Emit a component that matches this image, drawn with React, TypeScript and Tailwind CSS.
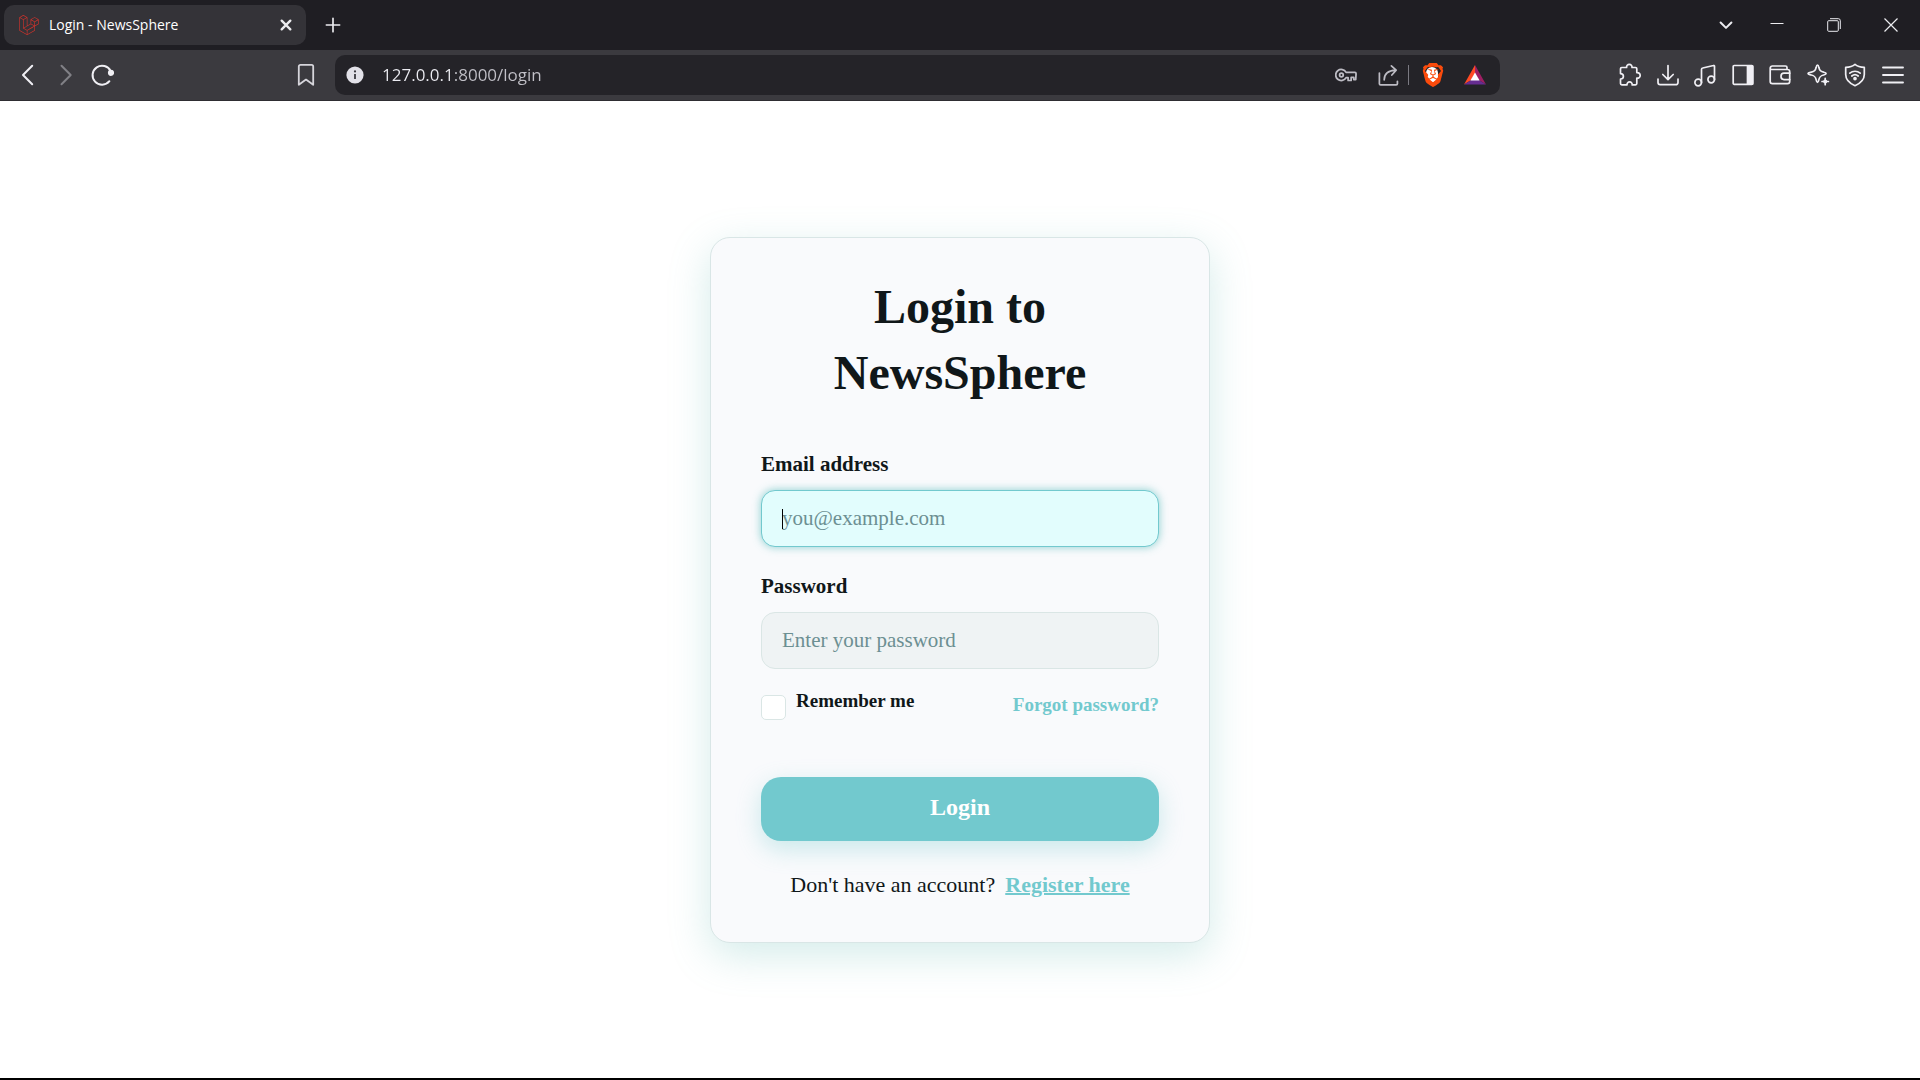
import type { ReactNode } from "react";
import { SiBrave, SiLaravel } from "react-icons/si";

function Icon({ children, width = 1.7, className = "size-6" }: { children: ReactNode; width?: number; className?: string }) {
  return (
    <svg
      viewBox="0 0 24 24"
      className={className}
      fill="none"
      stroke="currentColor"
      strokeWidth={width}
      strokeLinecap="round"
      strokeLinejoin="round"
      aria-hidden="true"
    >
      {children}
    </svg>
  );
}

function TabStrip() {
  return (
    <header className="flex h-[50px] items-center bg-[#1f1e23] pr-px pl-1 text-[#ececf0]">
      <div className="flex h-10 w-[302px] items-center rounded-[10px] bg-[#343338] pr-3 pl-[15px]">
        <SiLaravel className="size-5 text-[#d2322b]" aria-hidden="true" />
        <span className="ml-2.5 flex-1 text-sm text-white">Login - NewsSphere</span>
        <button aria-label="Close tab" className="grid size-4 place-items-center">
          <Icon width={3.5} className="size-4">
            <path d="M5.5 5.5l13 13M18.5 5.5l-13 13" />
          </Icon>
        </button>
      </div>
      <button aria-label="New tab" className="ml-4 grid size-[22px] place-items-center">
        <Icon width={2} className="size-5">
          <path d="M12 4v16M4 12h16" />
        </Icon>
      </button>
      <div className="ml-auto flex h-full">
        <button aria-label="Search tabs" className="grid w-11 place-items-center">
          <Icon width={2.4} className="size-5">
            <path d="M5.5 9l6.5 6.5L18.5 9" />
          </Icon>
        </button>
        <button aria-label="Minimize" className="grid w-[57px] place-items-center">
          <svg viewBox="0 0 14 14" className="size-3.5" stroke="currentColor" aria-hidden="true">
            <path d="M0.5 5.5h13" />
          </svg>
        </button>
        <button aria-label="Restore" className="grid w-[57px] place-items-center">
          <svg viewBox="0 0 14 14" className="size-3.5" fill="none" stroke="currentColor" aria-hidden="true">
            <rect x="0.7" y="2.7" width="10.6" height="10.6" rx="1" />
            <path d="M3 0.7h8.3a2 2 0 0 1 2 2V11" />
          </svg>
        </button>
        <button aria-label="Close window" className="grid w-[57px] place-items-center">
          <svg viewBox="0 0 14 14" className="size-3.5" stroke="currentColor" strokeWidth="1.2" aria-hidden="true">
            <path d="M0.5 0.5l13 13M13.5 0.5l-13 13" />
          </svg>
        </button>
      </div>
    </header>
  );
}

function AddressBar() {
  return (
    <div className="flex h-10 flex-1 items-center rounded-[10px] bg-[#242328] pr-[13px] pl-[11px]">
      <svg viewBox="0 0 18 18" className="size-[18px]" aria-hidden="true">
        <circle cx="9" cy="9" r="8.6" fill="#e2e1e8" />
        <path d="M9 8v5" stroke="#3a393f" strokeWidth="1.8" />
        <circle cx="9" cy="5.4" r="1.1" fill="#3a393f" />
      </svg>
      {/* The host part of the address is lighter than the port and path. */}
      <input
        aria-label="Address"
        defaultValue="127.0.0.1:8000/login"
        className="ml-[18px] min-w-0 flex-1 bg-[linear-gradient(90deg,#ececf2_73px,#c2c1c8_73px)] bg-clip-text text-[17px] leading-6 text-transparent outline-none"
      />
      <div className="flex items-center text-[#bdbcc4]">
        <button aria-label="Saved passwords">
          <Icon width={1.9} className="h-6 w-[22px]">
            <path d="M12.1 9.2A6 6 0 1 0 12.1 14.8H14.3V18H17.6V14.6H20.5V17H22.6L23 10.5A1.3 1.3 0 0 0 21.7 9.2Z" />
            <circle cx="7" cy="12" r="2" />
          </Icon>
        </button>
        <button aria-label="Share" className="ml-5">
          <Icon width={1.8} className="size-[23px]">
            <path d="M2.5 9.5V20.5a1.3 1.3 0 0 0 1.3 1.3H20a1.3 1.3 0 0 0 1.3-1.3V18" />
            <path d="M7.5 16.5C7.5 10.5 11 7 19.5 6.5M15 2l5 4.5-4.5 5" />
          </Icon>
        </button>
        <span className="ml-2 h-5 w-px bg-[#7b7a82]" />
        <button aria-label="Brave Shields" className="relative ml-3 grid h-6 w-[22px] place-items-center">
          <span className="absolute h-4 w-3 rounded-full bg-white" />
          <SiBrave className="relative size-6 text-[#fb4b0c]" aria-hidden="true" />
        </button>
        <button aria-label="Brave Rewards" className="ml-5">
          <svg viewBox="0 0 24 22" className="h-[22px] w-6" aria-hidden="true">
            <path d="M12 1L1 20.5L8.2 16L12 9.3Z" fill="#ff4a24" />
            <path d="M12 1L23 20.5L15.8 16L12 9.3Z" fill="#9e1f63" />
            <path d="M1 20.5H23L15.8 16H8.2Z" fill="#662d91" />
            <path d="M12 8.6L16.6 16.4H7.4Z" fill="#fff" />
          </svg>
        </button>
      </div>
    </div>
  );
}

function Toolbar() {
  return (
    <nav aria-label="Browser toolbar" className="flex h-[51px] items-center border-b border-[#2e2d32] bg-[#3b3a3f] pr-[15px] text-[#f0eff4]">
      <div className="flex w-[335px] items-center pr-[17px] pl-4">
        <button aria-label="Back">
          <Icon width={2}><path d="M16.2 2.8L7 12l9.2 9.2" /></Icon>
        </button>
        <button aria-label="Forward" className="ml-3.5 text-[#818086]">
          <Icon width={2}><path d="M7.5 2.8l9.2 9.2-9.2 9.2" /></Icon>
        </button>
        <button aria-label="Reload" className="ml-3">
          <Icon width={2}>
            <path d="M20.6 8A9.5 9.5 0 1 0 19.4 18.2" />
            <circle cx="21" cy="9.8" r="2.1" fill="currentColor" />
          </Icon>
        </button>
        <button aria-label="Bookmark this page" className="ml-auto text-[#d6d5db]">
          <Icon width={1.8}><path d="M4.8 3.5a1.6 1.6 0 0 1 1.6-1.6H17.6a1.6 1.6 0 0 1 1.6 1.6V21.8L12 16.6L4.8 21.8Z" /></Icon>
        </button>
      </div>
      <AddressBar />
      <div className="ml-[118px] flex w-[287px] justify-between">
        <button aria-label="Extensions">
          <Icon><path d="M3.8 4.5H8.6C8.4 2.7 9.6 1.4 11.3 1.4S14.2 2.7 14 4.5H17.5a1.3 1.3 0 0 1 1.3 1.3V9.6c1.9-.2 3.4 1 3.4 2.8s-1.5 3-3.4 2.8V20.6a1.3 1.3 0 0 1-1.3 1.3H14.2c.1-1.8-1-3-2.6-3s-2.7 1.2-2.6 3H3.8a1.3 1.3 0 0 1-1.3-1.3V16c1.7 0 2.9-1.1 2.9-2.7S4.2 10.6 2.5 10.6V5.8A1.3 1.3 0 0 1 3.8 4.5Z" /></Icon>
        </button>
        <button aria-label="Downloads">
          <Icon><path d="M12 2.5v14M6.8 11.5L12 16.7l5.2-5.2M2 16v3.5a2.2 2.2 0 0 0 2.2 2.2H19.8a2.2 2.2 0 0 0 2.2-2.2V16" /></Icon>
        </button>
        <button aria-label="Playlist">
          <Icon>
            <circle cx="5.2" cy="19.5" r="3.3" />
            <circle cx="18.2" cy="16.5" r="3.3" />
            <path d="M8.5 19.5V6.5A1.5 1.5 0 0 1 9.7 5L20.5 2.5a.8.8 0 0 1 1 .8V16.5" />
          </Icon>
        </button>
        <button aria-label="Sidebar">
          <Icon>
            <rect x="2.2" y="2.5" width="19.6" height="18.8" rx="1" />
            <path d="M16.5 3H21.5V21H16.5Z" fill="currentColor" />
          </Icon>
        </button>
        <button aria-label="Wallet">
          <Icon>
            <path d="M2.2 5.2V18.5a2.2 2.2 0 0 0 2.2 2.2H19.5a2.2 2.2 0 0 0 2.2-2.2V8.7A2.2 2.2 0 0 0 19.5 6.5H3.5A1.3 1.3 0 0 1 2.2 5.2A2.2 2.2 0 0 1 4.4 3H17.5A1.5 1.5 0 0 1 19 4.5V6.5" />
            <path d="M21.7 10.2H16a3 3 0 0 0-3 3v.4a3 3 0 0 0 3 3h5.7" />
          </Icon>
        </button>
        <button aria-label="Assistant">
          <Icon>
            <path d="M11.5 2c.9 0 1 .5 1.3 2.3.7 3.3 1.6 4.2 4.9 4.9 1.9.4 2.4.5 2.4 1.4s-.5 1-2.4 1.4c-3.3.7-4.2 1.6-4.9 4.9-.3 1.9-.4 2.4-1.3 2.4s-1-.5-1.3-2.4c-.7-3.3-1.6-4.2-4.9-4.9C3.4 11.6 2 11.5 2 10.6s1.4-1 3.3-1.4c3.3-.7 4.2-1.6 4.9-4.9C10.5 2.5 10.6 2 11.5 2Z" />
            <path d="M19.2 15.3v6.4M16 18.5h6.4" />
            <circle cx="19.2" cy="18.5" r="1.2" fill="currentColor" />
          </Icon>
        </button>
        <button aria-label="VPN">
          <Icon>
            <path d="M12 1.3C14.5 3.5 17.5 4.2 21.3 4.3V11.5c0 5.5-4.3 9-9.3 11.2C7 20.5 2.7 17 2.7 11.5V4.3C6.5 4.2 9.5 3.5 12 1.3Z" />
            <path d="M6.8 10.2c3-2.6 7.4-2.6 10.4 0M8.8 13c1.9-1.6 4.5-1.6 6.4 0" />
            <circle cx="12" cy="15.6" r="1" fill="currentColor" />
          </Icon>
        </button>
        <button aria-label="Main menu">
          <Icon width={1.9}><path d="M2 4.5h20M2 12h20M2 19.5h20" /></Icon>
        </button>
      </div>
    </nav>
  );
}

const field = "h-[57px] w-full rounded-[14px] border px-5 text-[21px] placeholder:text-[#6c8f92] outline-none";
const label = "block text-[21px] leading-8 font-bold";

function LoginCard() {
  return (
    <section className="w-full max-w-[500px] rounded-[20px] border border-[#d9e6e6] bg-[#f9fafc] px-[50px] pt-9 pb-[41px] font-['Liberation_Serif',serif] text-[#101719] shadow-[0_12px_40px_rgba(100,185,180,0.28)]">
      <h1 className="px-10 text-center text-5xl leading-[66px] font-bold">Login to NewsSphere</h1>
      <form className="mt-[42px]" onSubmit={(event) => event.preventDefault()}>
        <label htmlFor="email" className={label}>Email address</label>
        <div className="relative mt-2.5">
          <input
            id="email"
            type="email"
            placeholder="you@example.com"
            className={`${field} border-[#72c9ce] bg-[#e2fdfd] caret-transparent shadow-[0_0_8px_rgba(90,190,190,0.7)]`}
          />
          <span aria-hidden="true" className="absolute top-[19px] left-[21px] h-5 w-px bg-black" />
        </div>
        <label htmlFor="password" className={`${label} mt-[23px]`}>Password</label>
        <input
          id="password"
          type="password"
          placeholder="Enter your password"
          className={`${field} mt-2.5 border-[#dae6e5] bg-[#eff3f4]`}
        />
        <div className="mt-5 flex items-start justify-between text-[19px] leading-6 font-bold">
          <div className="flex">
            <input
              id="remember"
              type="checkbox"
              className="mt-1.5 size-[25px] appearance-none rounded-[5px] border border-[#dae6e5] bg-white checked:bg-[#72c9ce]"
            />
            <label htmlFor="remember" className="ml-2.5">Remember me</label>
          </div>
          <a href="#forgot" className="mt-1 text-[#72c9ce]">Forgot password?</a>
        </div>
        <button
          type="submit"
          className="mt-[57px] block h-16 w-full rounded-[20px] bg-[#72c9ce] pb-1 text-2xl font-bold text-white shadow-[0_8px_24px_rgba(100,195,200,0.32)]"
        >
          Login
        </button>
      </form>
      <p className="mt-7 flex justify-center gap-2.5 text-[22px] leading-8 whitespace-nowrap">
        <span>Don't have an account?</span>
        <a href="#register" className="font-bold text-[#72c9ce] underline decoration-2">Register here</a>
      </p>
    </section>
  );
}

export default function App() {
  return (
    <div className="flex min-h-screen flex-col border-b-2 border-black bg-white font-['Open_Sans',sans-serif]">
      <TabStrip />
      <Toolbar />
      <main className="flex flex-1 items-center justify-center bg-white">
        <LoginCard />
      </main>
    </div>
  );
}
